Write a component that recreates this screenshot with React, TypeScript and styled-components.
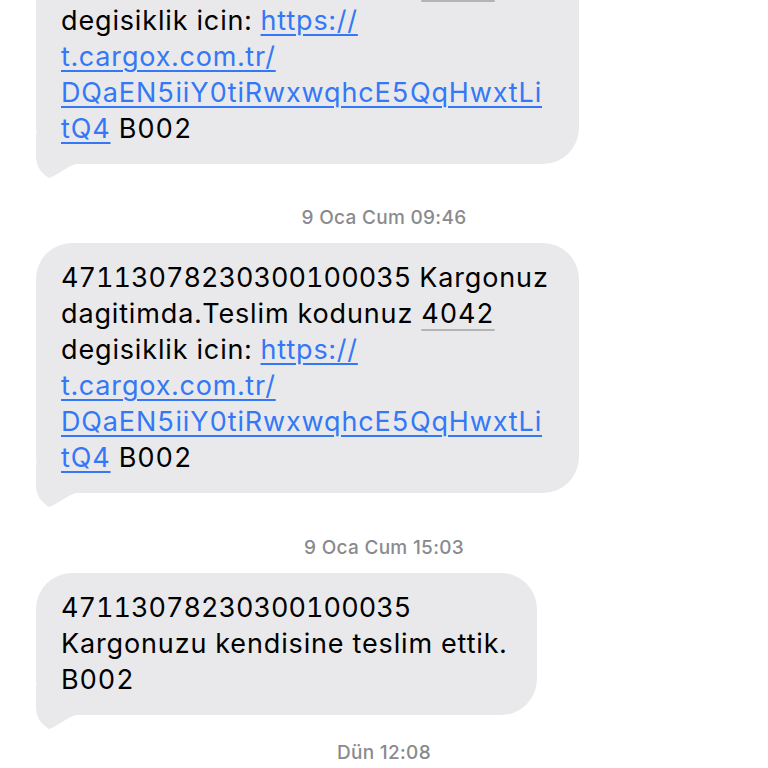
import * as React from 'react';
import styled, { createGlobalStyle } from 'styled-components';

const GlobalStyle = createGlobalStyle`
  html, body {
    margin: 0;
    padding: 0;
    background: #ffffff;
    overflow: hidden;
  }
  body {
    font-family: Inter, "Noto Sans", "Liberation Sans", sans-serif;
    -webkit-font-smoothing: antialiased;
  }
`;

const Viewport = styled.div`
  width: 768px;
  height: 768px;
  overflow: hidden;
`;

// scrolled thread: first bubble is partly above the top edge
const Thread = styled.div`
  display: flex;
  flex-direction: column;
  align-items: flex-start;
  padding: 0 36px;
  margin-top: -86px;
`;

const Bubble = styled.div`
  position: relative;
  background: #e9e9eb;
  border-radius: 36px;
  padding: 17px 30px 17px 25px;
  color: #000000;
  font-size: 27px;
  line-height: 36px;
  letter-spacing: 0.85px;
  font-variant-numeric: tabular-nums;
`;

const Line = styled.div`
  position: relative;
  white-space: nowrap;
`;

// long tracking number sits tighter than running text
const TrackingNo = styled.span`
  letter-spacing: 0;
`;

const Link = styled.span`
  color: #3478f6;
  text-decoration: underline;
  text-decoration-thickness: 1.5px;
  text-underline-offset: 4px;
`;

const Code = styled.span`
  text-decoration: underline;
  text-decoration-color: #b4b4b8;
  text-decoration-thickness: 2px;
  text-underline-offset: 6px;
`;

const Tail = styled.svg`
  position: absolute;
  left: 0;
  bottom: -15px;
  width: 50px;
  height: 45px;
`;

interface StampProps {
  $top: number;
  $bottom: number;
}

const Timestamp = styled.div<StampProps>`
  align-self: center;
  margin: ${(p) => p.$top}px 0 ${(p) => p.$bottom}px;
  color: #8a8a8e;
  font-size: 19px;
  font-weight: 500;
  line-height: 24px;
  letter-spacing: 0.3px;
  text-align: center;
`;

const BubbleTail = (): React.ReactElement => (
  <Tail viewBox="0 0 50 45">
    <path d="M0 0 L0 22 C0 32 5 39 13 44 C22 41 30 33 40 30 L50 30 L50 0 Z" fill="#e9e9eb" />
  </Tail>
);

const DeliveryMessage = (): React.ReactElement => (
  <Bubble>
    <BubbleTail />
    <Line>
      <TrackingNo>47113078230300100035</TrackingNo> Kargonuz
    </Line>
    <Line>
      dagitimda.Teslim kodunuz <Code>4042</Code>
    </Line>
    <Line>
      degisiklik icin: <Link>https://</Link>
    </Line>
    <Line>
      <Link>t.cargox.com.tr/</Link>
    </Line>
    <Line>
      <Link>DQaEN5iiY0tiRwxwqhcE5QqHwxtLi</Link>
    </Line>
    <Line>
      <Link>tQ4</Link> B002
    </Line>
  </Bubble>
);

const App = (): React.ReactElement => {
  return (
    <>
      <GlobalStyle />
      <Viewport>
        <Thread>
          <DeliveryMessage />
          <Timestamp $top={42} $bottom={13}>9 Oca Cum 09:46</Timestamp>
          <DeliveryMessage />
          <Timestamp $top={43} $bottom={13}>9 Oca Cum 15:03</Timestamp>
          <Bubble>
            <BubbleTail />
            <Line>
              <TrackingNo>47113078230300100035</TrackingNo>
            </Line>
            <Line>Kargonuzu kendisine teslim ettik.</Line>
            <Line>B002</Line>
          </Bubble>
          <Timestamp $top={26} $bottom={0}>Dün 12:08</Timestamp>
        </Thread>
      </Viewport>
    </>
  );
};

export default App;
